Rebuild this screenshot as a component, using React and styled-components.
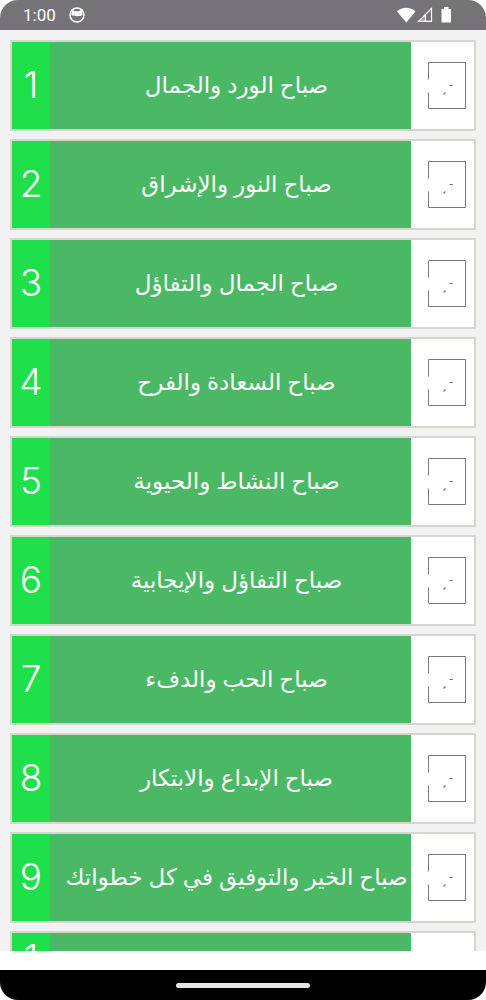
import React from 'react';
import styled, { createGlobalStyle } from 'styled-components';

const messages = [
    'صباح الورد والجمال',
    'صباح النور والإشراق',
    'صباح الجمال والتفاؤل',
    'صباح السعادة والفرح',
    'صباح النشاط والحيوية',
    'صباح التفاؤل والإيجابية',
    'صباح الحب والدفء',
    'صباح الإبداع والابتكار',
    'صباح الخير والتوفيق في كل خطواتك',
    '',
]

const StatusBar = () => (
    <StatusContainer>
        <StatusGroup>
            <span>1:00</span>
            <svg width="16" height="16" viewBox="0 0 16 16">
                <circle cx="8" cy="8" r="7" fill="none" stroke="#fff" strokeWidth="1.5" />
                <path d="M2.5 2 L6 4.2 H10 L13.5 2 V8 C11.5 9.6 4.5 9.6 2.5 8 Z" fill="#fff" />
                <circle cx="5.5" cy="7" r="0.4" fill="#757377" />
                <circle cx="10.5" cy="7" r="0.4" fill="#757377" />
            </svg>
        </StatusGroup>
        <svg width="55" height="16" viewBox="0 0 55 16">
            <path d="M0 4.5 C5 -0.5 13.5 -0.5 18.5 4.5 L9.3 15.5 Z" fill="#fff" />
            <path d="M21.5 14.4 L34.5 1.5 V14.4 Z" fill="none" stroke="#fff" strokeWidth="1.2" />
            <path d="M21 15 L28.5 7.5 V15 Z" fill="#fff" fillOpacity="0.35" />
            <path d="M28.5 8 V14" stroke="#fff" strokeWidth="1.2" />
            <path d="M44.5 2 H47 V0 H51.5 V2 H54 V15.5 H44.5 Z" fill="#fff" />
        </svg>
    </StatusContainer>
)

const MessageRow = ({ number, text }) => (
    <Row>
        <NumberBox>{number}</NumberBox>
        <Message lang='ar' dir='rtl'>{text}</Message>
        <ShareButton type='button' aria-label={`Share ${number}`}>
            <svg width="38" height="48" viewBox="0 0 38 48" fill="none" stroke="#77777a">
                <path d="M0.5 17.5 V0.5 H37.5 V46.5 H0.5 V30.5" />
                <path d="M21.5 23.5 H25" />
                <path d="M15.5 32.5 L17.5 30.5" strokeWidth="1.2" />
            </svg>
        </ShareButton>
    </Row>
)

const App = () => (
    <Screen>
        <GlobalStyle />
        <StatusBar />
        <List>
            {messages.map((text, index) => (
                <MessageRow key={index} number={index + 1} text={text} />
            ))}
        </List>
        <NavBar>
            <HomeHandle />
        </NavBar>
    </Screen>
)

export default App

const GlobalStyle = createGlobalStyle`
    * {
        box-sizing: border-box;
    }
    body {
        margin: 0;
        background-color: #fff;
        font-family: Roboto, 'Noto Sans', sans-serif;
    }
`
const Screen = styled.div`
    display: flex;
    flex-direction: column;
    height: 100vh;
    overflow: hidden;
`
const StatusContainer = styled.header`
    display: flex;
    flex: none;
    justify-content: space-between;
    align-items: center;
    height: 30px;
    padding: 0 34px 0 23px;
    border-radius: 18px 18px 0 0;
    background-color: #757377;
    color: #fff;
    font-size: 17px;
`
const StatusGroup = styled.div`
    display: flex;
    align-items: center;
    gap: 13px;
`
const List = styled.ol`
    display: flex;
    flex: 1;
    flex-direction: column;
    gap: 8px;
    min-height: 0;
    margin: 0 0 19px;
    padding: 10px 10px 0;
    overflow: hidden;
    background-color: #f3f2f3;
    list-style: none;
`
const Row = styled.li`
    display: flex;
    flex: none;
    height: 91px;
    border: 2px solid #d6d5d0;
    background-color: #fff;
`
const NumberBox = styled.div`
    display: flex;
    flex: none;
    align-items: center;
    justify-content: center;
    width: 38px;
    padding: 0 7px 2px;
    background-color: #1fe04b;
    color: #fff;
    font-family: Inter, Roboto, sans-serif;
    font-size: 37px;
    font-weight: 300;
    line-height: 36px;
    text-align: center;
    word-break: break-all;
`
const Message = styled.div`
    display: flex;
    flex: 1;
    align-items: center;
    justify-content: center;
    padding: 0 0 4px 12px;
    background-color: #4bb865;
    color: #fff;
    font-family: 'Noto Sans', 'DejaVu Sans', sans-serif;
    font-size: 23px;
    white-space: nowrap;
`
const ShareButton = styled.button`
    display: flex;
    flex: none;
    align-items: center;
    justify-content: center;
    width: 63px;
    padding: 0 0 0 8px;
    border: none;
    background: none;
    cursor: pointer;
`
const NavBar = styled.footer`
    display: flex;
    flex: none;
    align-items: center;
    justify-content: center;
    height: 30px;
    border-radius: 0 0 18px 18px;
    background-color: #000;
`
const HomeHandle = styled.div`
    width: 134px;
    height: 5px;
    border-radius: 3px;
    background-color: #e4e4e4;
`
